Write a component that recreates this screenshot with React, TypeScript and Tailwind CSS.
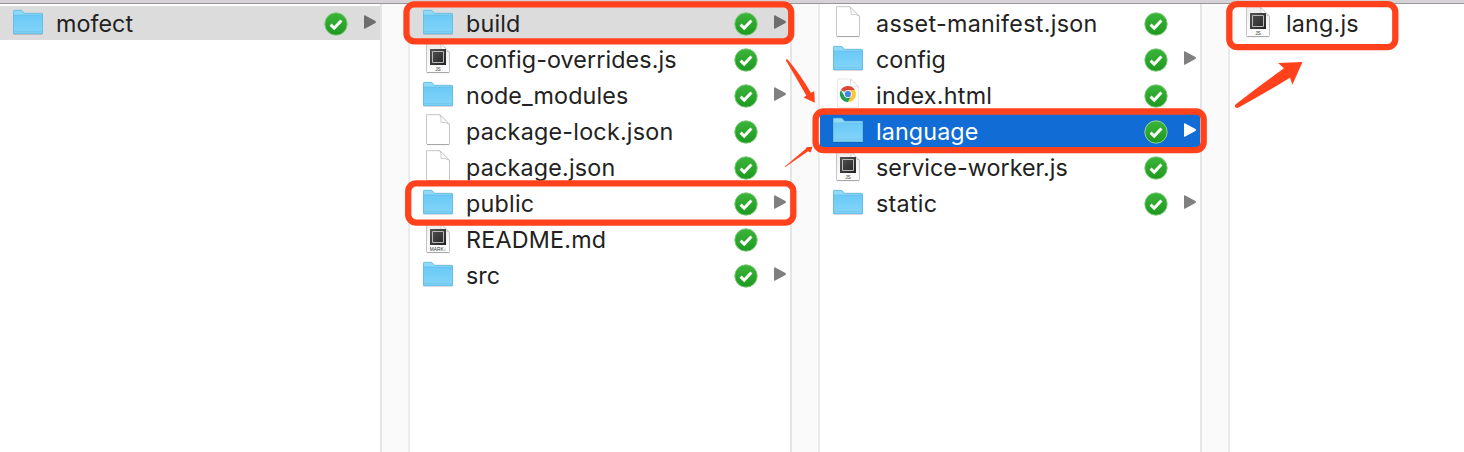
type Kind = "folder" | "blank" | "js" | "md" | "html";
type Entry = { name: string; kind: Kind; state?: "open" | "active"; spacing: string };

const first: Entry[] = [{ name: "mofect", kind: "folder", state: "open", spacing: "tracking-[0.05px]" }];
const second: Entry[] = [
  { name: "build", kind: "folder", state: "open", spacing: "tracking-[0.2px]" },
  { name: "config-overrides.js", kind: "js", spacing: "tracking-[0.1px]" },
  { name: "node_modules", kind: "folder", spacing: "tracking-[0.12px]" },
  { name: "package-lock.json", kind: "blank", spacing: "tracking-[0.24px]" },
  { name: "package.json", kind: "blank", spacing: "tracking-[0.2px]" },
  { name: "public", kind: "folder", spacing: "tracking-[0.25px]" },
  { name: "README.md", kind: "md", spacing: "tracking-[0.22px]" },
  { name: "src", kind: "folder", spacing: "tracking-[0px]" },
];
const third: Entry[] = [
  { name: "asset-manifest.json", kind: "blank", spacing: "tracking-[0.3px]" },
  { name: "config", kind: "folder", spacing: "tracking-[0.05px]" },
  { name: "index.html", kind: "html", spacing: "tracking-[0.26px]" },
  { name: "language", kind: "folder", state: "active", spacing: "tracking-[0.12px]" },
  { name: "service-worker.js", kind: "js", spacing: "tracking-[0.05px]" },
  { name: "static", kind: "folder", spacing: "tracking-[0.27px]" },
];
const fourth: Entry[] = [{ name: "lang.js", kind: "js", spacing: "tracking-[0.2px]" }];

function Gradients() {
  return (
    <svg className="absolute h-0 w-0" aria-hidden="true">
      <defs>
        <linearGradient id="folder" x1="0" y1="0" x2="0" y2="1">
          <stop offset="0" stopColor="#6bcaf6" />
          <stop offset="1" stopColor="#83d5f9" />
        </linearGradient>
        <linearGradient id="paper" x1="0" y1="0" x2="0" y2="1">
          <stop offset="0" stopColor="#ececec" />
          <stop offset="1" stopColor="#ffffff" />
        </linearGradient>
        <linearGradient id="chip" x1="0" y1="0" x2="1" y2="1">
          <stop offset="0" stopColor="#555" />
          <stop offset="1" stopColor="#222" />
        </linearGradient>
        <linearGradient id="badge" x1="0" y1="0" x2="0" y2="1">
          <stop offset="0" stopColor="#3bb53a" />
          <stop offset="1" stopColor="#1f981f" />
        </linearGradient>
      </defs>
    </svg>
  );
}

function Folder() {
  return (
    <svg width="30" height="34" viewBox="0 0 30 34" className="block">
      <path d="M.4 28h29.2v.7H.4z" fill="#000" opacity=".18" />
      <path d="M0 27V5.5Q0 4 1.4 4H8q1 0 1.7.9L11 6.5q.5.6 1.4.6h16.2Q30 7.1 30 8.5V27q0 1-1 1H1q-1 0-1-1z" fill="#8fd8f7" />
      <path d="M0 9.3h30V27q0 1-1 1H1q-1 0-1-1z" fill="url(#folder)" />
      <path d="M0 9.1h30" stroke="#5bb9e6" strokeWidth=".7" />
      <path d="M.4 27V5.5Q.4 4.3 1.4 4.3H8q.8 0 1.5.8L10.8 6.6q.6.7 1.6.7h16.2q1 0 1 1.2V27q0 .6-.6.6H1q-.6 0-.6-.6z" fill="none" stroke="#5eb5dc" strokeWidth=".7" />
      <path d="M.8 25.7h28.4" stroke="#69bfe8" strokeWidth=".6" />
    </svg>
  );
}

function Chrome() {
  return (
    <g transform="translate(10.9 16)">
      <path d="M0 0L-6.93-4A8 8 0 0 1 6.93-4z" fill="#df4536" />
      <path d="M0-4H6.93A8 8 0 0 1 0 8L3.46 2z" fill="#fbc92f" />
      <path d="M-3.46 2L-6.93-4A8 8 0 0 0 0 8L3.46 2z" fill="#219b57" />
      <circle r="4" fill="#f4f4f4" />
      <circle r="3.1" fill="#4285e8" />
    </g>
  );
}

function Page({ kind }: { kind: Kind }) {
  if (kind === "html") {
    return (
      <svg width="30" height="34" viewBox="-4 0 30 34" className="block">
        <path d="M.5 1h13.2l7.8 8V29.4H.5z" fill="#fdfdfd" stroke="#e2e2e2" strokeWidth=".8" />
        <path d="M13.7 1v6.5q0 1.3 1.3 1.3h6.5z" fill="#fff" stroke="#d4d4d4" strokeWidth=".8" />
        <Chrome />
      </svg>
    );
  }
  const chip = kind === "js" || kind === "md";
  return (
    <svg width="30" height="34" viewBox="-3 0 30 34" className="block">
      <path d="M.5 .7H14l9.5 9.7V29.6q0 .9-.9.9H1.4q-.9 0-.9-.9z" fill={chip ? "url(#paper)" : "#fff"} stroke="#c4c4c4" strokeWidth="1" />
      <path d="M1 30.6h22" stroke="#a0a0a0" strokeWidth=".9" />
      <path d="M14 .8Q15.6 4.5 15 8.3 19.5 7.8 23.4 10.3z" fill="#fff" stroke="#c2c2c2" strokeWidth=".8" />
      {chip && (
        <>
          <path d="M4 7h16v16H4z" fill="url(#chip)" />
          <path d="M6.5 9.5h11v11h-11z" fill="none" stroke="#b9b9b9" strokeWidth="1" />
          <text x="12" y="28.5" textAnchor="middle" fontFamily="Liberation Sans, sans-serif" fontSize="4.8" fill="#333">
            {kind === "js" ? "JS" : "MARK↓"}
          </text>
        </>
      )}
    </svg>
  );
}

function Badge({ active }: { active: boolean }) {
  return (
    <svg width="24" height="24" viewBox="0 0 24 24" className="block">
      <circle cx="12" cy="12" r="11.2" fill="url(#badge)" stroke={active ? "#a3d8a0" : "#7fcb7c"} strokeWidth=".9" />
      <path d="M6.6 12.6l3.6 3.5 7.2-7.6" fill="none" stroke="#fff" strokeWidth="2.9" />
    </svg>
  );
}

function Row({ entry }: { entry: Entry }) {
  const active = entry.state === "active";
  const open = entry.state === "open";
  const tone = active ? "bg-[#116cd6] text-white" : open ? "bg-[#dcdcdc] text-[#222222]" : "text-[#222222]";
  return (
    <li className={`flex h-[34px] items-center pr-1 pl-[13px] ${tone}`}>
      {entry.kind === "folder" ? <Folder /> : <Page kind={entry.kind} />}
      <span className={`ml-[13px] flex-1 pt-[2px] text-[23.3px] leading-[34px] font-[420] whitespace-nowrap ${entry.spacing}`}>{entry.name}</span>
      {entry.name !== "lang.js" && (
        <span className="mt-[2px]">
          <Badge active={active} />
        </span>
      )}
      <svg width="12" height="14" viewBox="0 0 12 14" className="mb-[2px] ml-4 block">
        {entry.kind === "folder" && (
          <path d="M0 1.1Q0 -.3 1.3.4L11.4 6.1Q12.6 7 11.4 7.9L1.3 13.6Q0 14.3 0 12.9z" fill={active ? "#fff" : open ? "#6e6e6e" : "#808080"} />
        )}
      </svg>
    </li>
  );
}

function Column({ entries }: { entries: Entry[] }) {
  return (
    <section className="flex h-full w-[410px] shrink-0">
      <ul className="flex w-[380px] flex-col gap-[2px] pt-[2px]">
        {entries.map((entry) => (
          <Row key={entry.name} entry={entry} />
        ))}
      </ul>
      <div className="w-[30px] border-x-2 border-l-[#e5e5e5] border-r-[#ebebeb] bg-[#fafafa]" />
    </section>
  );
}

function Annotations() {
  return (
    <svg width="1464" height="452" viewBox="0 0 1464 452" className="pointer-events-none absolute top-0 left-0">
      <g fill="none" stroke="#ff421c" strokeWidth="6.3">
        <rect x="406.5" y="4.3" width="384.7" height="37.1" rx="8" />
        <rect x="408.2" y="183.4" width="385.1" height="39.2" rx="8" />
        <rect x="815.6" y="111.5" width="388.1" height="38.6" rx="8" />
        <rect x="1229.3" y="4.2" width="166" height="43" rx="8" />
      </g>
      <g fill="#ff421c">
        <path d="M785.8 60.2Q786.2 58.8 787.6 59.5 800 74 810.9 92.8L814.3 91.3 814.8 102.8 803.6 97.4 806.3 95.6Q797 79 785.8 60.2z" />
        <path d="M784.6 166.8L805.6 149 806.6 147.3 812.4 146.8 810.7 152.4 808 151.2 785 167.2z" />
        <path d="M1235.5 104.5Q1255 89 1284 68.3L1278 63 1302.5 62 1292.4 84.7 1290 77.7Q1265 93 1239 107.3C1236.5 109 1233.5 107 1235.5 104.5z" />
      </g>
    </svg>
  );
}

export default function App() {
  return (
    <main className="relative flex h-[452px] w-[1464px] flex-col overflow-hidden bg-white font-['Inter',sans-serif]">
      <Gradients />
      <div className="h-1 shrink-0 border-b border-[#98969a] bg-[#d6d3d7]" />
      <div className="flex min-h-0 flex-1">
        <Column entries={first} />
        <Column entries={second} />
        <Column entries={third} />
        <Column entries={fourth} />
      </div>
      <Annotations />
    </main>
  );
}
